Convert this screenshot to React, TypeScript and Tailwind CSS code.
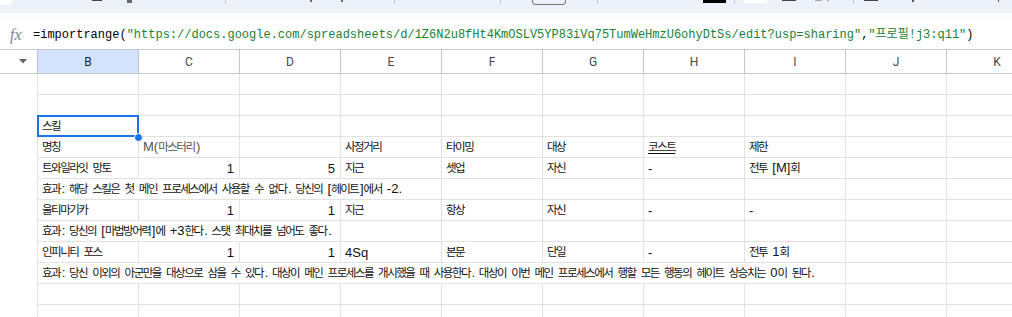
import React from "react";

const FONT = { fontFamily: '"Liberation Sans", "Noto Sans CJK KR", Arial, sans-serif' };

type Cell = { t?: string; span?: number; right?: boolean; gray?: boolean; u?: boolean };

const rows: Cell[][] = [
  [],
  [],
  [{ t: "스킬" }],
  [{ t: "명칭" }, { t: "M(마스터리)", gray: true }, {}, { t: "사정거리" }, { t: "타이밍" }, { t: "대상" }, { t: "코스트", u: true }, { t: "제한" }],
  [{ t: "트와일라잇 망토" }, { t: "1", right: true }, { t: "5", right: true }, { t: "지근" }, { t: "셋업" }, { t: "자신" }, { t: "-" }, { t: "전투 [M]회" }],
  [{ t: "효과: 해당 스킬은 첫 메인 프로세스에서 사용할 수 없다. 당신의 [헤이트]에서 -2.", span: 4 }],
  [{ t: "울티마기카" }, { t: "1", right: true }, { t: "1", right: true }, { t: "지근" }, { t: "항상" }, { t: "자신" }, { t: "-" }, { t: "-" }],
  [{ t: "효과: 당신의 [마법방어력]에 +3한다. 스탯 최대치를 넘어도 좋다.", span: 3 }],
  [{ t: "인피니티 포스" }, { t: "1", right: true }, { t: "1", right: true }, { t: "4Sq" }, { t: "본문" }, { t: "단일" }, { t: "-" }, { t: "전투 1회" }],
  [{ t: "효과: 당신 이외의 아군만을 대상으로 삼을 수 있다. 대상이 메인 프로세스를 개시했을 때 사용한다. 대상이 이번 메인 프로세스에서 행할 모든 행동의 헤이트 상승치는 0이 된다.", span: 8 }],
  [],
  [],
];

const spanClass: Record<number, string> = {
  1: "col-span-1",
  3: "col-span-3",
  4: "col-span-4",
  8: "col-span-8",
};

function KText({ s }: { s: string }) {
  const parts = s.split(/([\uAC00-\uD7A3]+)/);
  return (
    <span className="whitespace-pre">
      {parts.map((p, i) =>
        /[\uAC00-\uD7A3]/.test(p) ? (
          <span key={i} className="text-[11.5px] tracking-[-1.5px] pr-[1.5px]">
            {p}
          </span>
        ) : (
          <span key={i}>{p}</span>
        )
      )}
    </span>
  );
}

function Row({ cells, idx }: { cells: Cell[]; idx: number }) {
  const out: React.ReactNode[] = [];
  let used = 0;
  cells.forEach((c, i) => {
    const span = c.span ?? 1;
    used += span;
    out.push(
      <div
        key={i}
        className={`${spanClass[span]} h-[21px] border-r border-b border-[#e2e2e2] flex items-center overflow-visible whitespace-nowrap text-[13px] leading-none ${
          c.right ? "justify-end pr-[5px]" : "pl-[4px]"
        } ${c.gray ? "text-[#555]" : "text-[#111]"} ${c.u ? "underline underline-offset-2" : ""}`}
      >
        {c.t ? <KText s={c.t} /> : ""}
      </div>
    );
  });
  for (let k = used; k < 10; k++) {
    out.push(<div key={"e" + k} className="h-[21px] border-r border-b border-[#e2e2e2]" />);
  }
  return (
    <>
      <div key={"h" + idx} className="h-[21px] border-r border-[#e2e2e2]" />
      {out}
    </>
  );
}

export default function App() {
  const cols = ["B", "C", "D", "E", "F", "G", "H", "I", "J", "K"];
  return (
    <div className="w-[1012px] h-[317px] overflow-hidden bg-white" style={FONT}>
      {/* toolbar remnant */}
      <div className="h-[13px] bg-[#edf2fa] flex items-start">
        <div className="w-[13px] h-[5px] bg-white rounded-br-[10px] shrink-0" />
        <div className="ml-[79px] w-[10px] h-[1px] bg-[#444] shrink-0" />
        <div className="ml-[25px] w-[5px] h-[3px] bg-[#666] shrink-0" />
        <div className="ml-[93px] w-[1px] h-[4px] bg-[#c4c7c5] shrink-0" />
        <div className="ml-[84px] w-[2px] h-[2px] bg-[#666] shrink-0" />
        <div className="ml-[29px] w-[2px] h-[2px] bg-[#666] shrink-0" />
        <div className="ml-[51px] w-[1px] h-[4px] bg-[#c4c7c5] shrink-0" />
        <div className="ml-[105px] w-[1px] h-[4px] bg-[#c4c7c5] shrink-0" />
        <div className="ml-[31px] w-[34px] h-[5px] border border-t-0 border-[#747775] rounded-b-[4px] shrink-0" />
        <div className="ml-[31px] w-[1px] h-[4px] bg-[#c4c7c5] shrink-0" />
        <div className="ml-[105px] w-[23px] h-[3px] bg-black shrink-0" />
        <div className="ml-[8px] w-[1px] h-[4px] bg-[#c4c7c5] shrink-0" />
        <div className="ml-[9px] w-[23px] h-[3px] bg-white shrink-0" />
        <div className="ml-[15px] w-[14px] h-[1px] bg-[#444] shrink-0" />
        <div className="ml-[19px] w-[7px] h-[1px] bg-[#aaa] shrink-0" />
        <div className="ml-[5px] w-[2px] h-[1px] bg-[#aaa] shrink-0" />
        <div className="ml-[24px] w-[1px] h-[4px] bg-[#c4c7c5] shrink-0" />
        <div className="ml-[10px] w-[14px] h-[1px] bg-[#444] shrink-0" />
        <div className="ml-[34px] w-[2px] h-[2px] bg-[#555] shrink-0" />
        <div className="ml-[84px] w-[1px] h-[2px] bg-[#555] shrink-0" />
      </div>
      <div className="h-[7px] bg-[#f9fbfd]" />
      {/* formula bar */}
      <div className="h-[29px] flex items-center bg-white">
        <span
          className="ml-[10px] w-[20px] italic text-[16px] text-[#80868b] leading-none"
          style={{ fontFamily: '"Liberation Serif", serif' }}
        >
          fx
        </span>
        <span
          className="ml-[3px] text-[12px] whitespace-nowrap text-black"
          style={{ fontFamily: '"Liberation Mono", "Noto Sans CJK KR", monospace' }}
        >
          =importrange(
          <span className="text-[#188038]">
            "https://docs.google.com/spreadsheets/d/1Z6N2u8fHt4KmOSLV5YP83iVq75TumWeHmzU6ohyDtSs/edit?usp=sharing"
          </span>
          ,<span className="text-[#188038]">"프로필!j3:q11"</span>)
        </span>
      </div>
      {/* grid */}
      <div className="relative grid grid-cols-[38px_repeat(10,101px)] w-[1048px]">
        <div className="h-[25px] border-t border-b border-r border-[#c4c7c5] flex items-center justify-center">
          <svg width="8" height="5" viewBox="0 0 8 5" className="ml-[8px]">
            <path d="M0 0 L8 0 L4 4.5 Z" fill="#5f6368" />
          </svg>
        </div>
        {cols.map((c) => (
          <div
            key={c}
            className={`h-[25px] border-t border-b border-r border-[#c4c7c5] flex items-center justify-center text-[12px] ${
              c === "B" ? "bg-[#d3e3fd] text-[#1f1f1f]" : "bg-white text-[#444746]"
            }`}
            style={{ fontFamily: '"Roboto", "Liberation Sans", sans-serif' }}
          >
            {c}
          </div>
        ))}
        {rows.map((r, i) => (
          <Row key={i} cells={r} idx={i} />
        ))}
        {/* selection */}
        <div className="absolute left-[37px] top-[66px] w-[102px] h-[22px] border-2 border-[#1a73e8] pointer-events-none" />
        <div className="absolute left-[134px] top-[84px] w-[9px] h-[9px] rounded-full bg-[#1a73e8] border border-white" />
      </div>
    </div>
  );
}
